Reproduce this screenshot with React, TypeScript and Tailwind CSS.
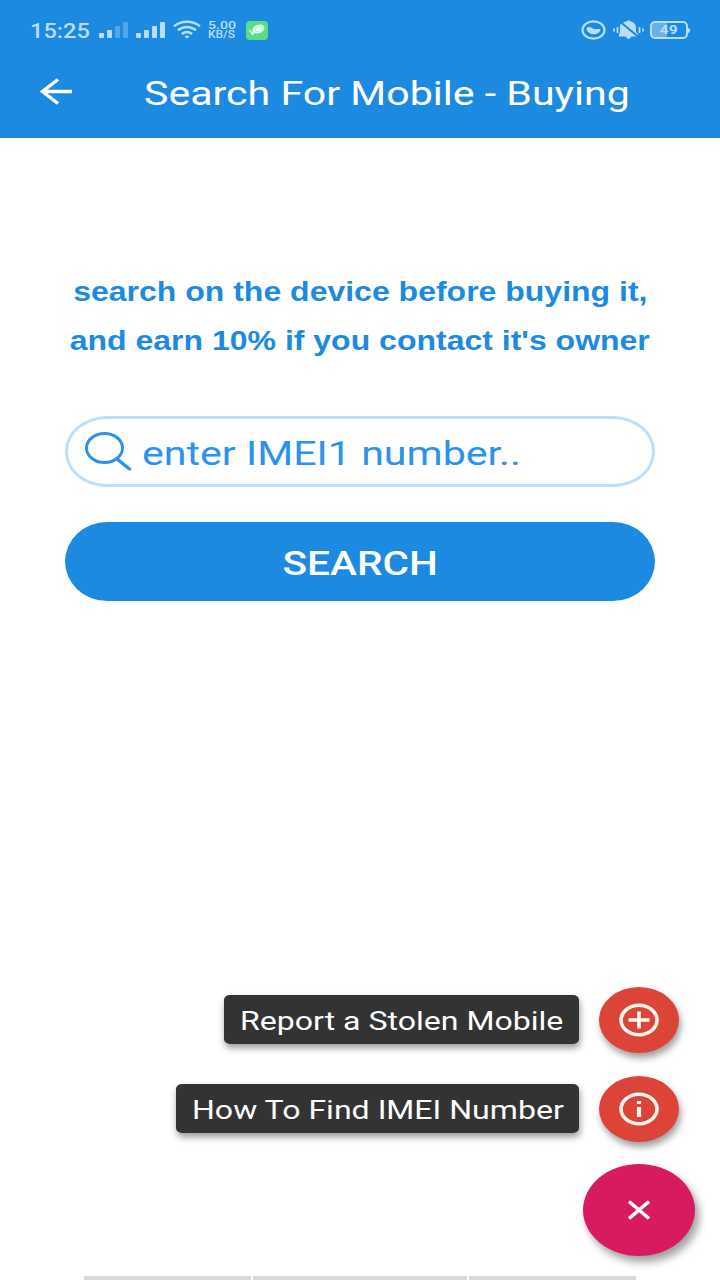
import React from 'react';

interface WideTextProps {
  children: React.ReactNode;
  className?: string;
}

// Text is drawn wider than its natural width, the scale comes from the class name
function WideText({ children, className = '' }: WideTextProps) {
  return <span className={`inline-block whitespace-nowrap ${className}`}>{children}</span>;
}

function SignalBars({ level, className = '' }: { level: number; className?: string }) {
  const heights = [5, 8, 12, 16];
  return (
    <svg className={className} width="29" height="17" viewBox="0 0 29 17" fill="#b9dcf7">
      {heights.map((h, idx) => (
        <rect key={idx} x={idx * 8} y={17 - h} width="5" height={h} rx="1" opacity={idx < level ? 1 : 0.35} />
      ))}
    </svg>
  );
}

function StatusBar() {
  return (
    <div className="flex h-[60px] items-center pl-[30px] pr-[30px] text-[#b9dcf7]">
      <div className="flex w-[69px] pt-[1px]">
        <WideText className="origin-left scale-x-[1.18] text-[20px] font-medium leading-none">15:25</WideText>
      </div>
      <SignalBars level={2} className="mt-[-2px]" />
      <SignalBars level={4} className="ml-2 mt-[-2px]" />
      <svg className="ml-2" width="28" height="20" viewBox="0 0 28 20" fill="none" stroke="#b9dcf7" strokeWidth="2.4">
        <path d="M1 6.2C8.5 .3 19.5 .3 27 6.2" />
        <path d="M5 10.3C10.5 5.8 17.5 5.8 23 10.3" />
        <path d="M8.8 14C12 11.4 16 11.4 19.2 14" />
        <path d="M11.5 16.4Q14 14.8 16.5 16.4L14 18.8Z" fill="#b9dcf7" stroke="none" />
      </svg>
      <div className="ml-[7px] flex w-[38px] flex-col items-start text-[10.5px] font-medium leading-[9.5px]">
        <WideText className="origin-left scale-x-[1.35]">5.00</WideText>
        <WideText className="origin-left scale-x-[1.14]">KB/S</WideText>
      </div>
      <svg width="22" height="19" viewBox="0 0 22 19">
        <rect width="22" height="19" rx="4" fill="#5bdc8b" />
        <ellipse cx="12.5" cy="8" rx="6" ry="4.3" fill="#e9fff0" transform="rotate(-18 12.5 8)" />
        <ellipse cx="13" cy="8" rx="4.2" ry="2.8" fill="none" stroke="#83dca4" strokeWidth=".5" transform="rotate(-18 13 8)" />
        <path d="M3.8 8.5Q3.5 12 7.5 13.8" fill="none" stroke="#e9fff0" strokeWidth="1" />
        <circle cx="6.5" cy="12" r="1.7" fill="#e9fff0" />
      </svg>

      <svg className="ml-auto" width="25" height="20" viewBox="0 0 25 20">
        <ellipse cx="12.5" cy="10" rx="11" ry="8.7" fill="none" stroke="#b9dcf7" strokeWidth="2.2" />
        <path d="M5.5 8.5C7 6 10 7.2 12 8.6C14.5 10 17 8.4 19.5 9.5C18.5 16 6.5 16 5.500 8.500Z" fill="#b9dcf7" />
      </svg>
      <svg className="ml-[7px]" width="31" height="20" viewBox="0 0 31 20">
        <path
          d="M6 16.5V14L7 12V5L9 3.5C10.5 2.2 12 1.7 13.5 1.5C14 .2 17 .2 17.5 1.5C21 2 23 4.5 23 8V12L25 14V16.5H18C17.5 19.8 13.5 19.8 13 16.5Z"
          fill="#b9dcf7"
        />
        <path d="M7.5 2L25.5 17" stroke="#1d8ae2" strokeWidth="2" />
        <path d="M1 8.5V11.5M4.5 7V13M26.5 7V13M30 8.5V11.5" stroke="#b9dcf7" strokeWidth="1.7" />
      </svg>
      <div className="ml-[6px] flex items-center">
        <div className="flex h-[18px] w-[38px] items-center justify-center rounded-[5px] border-2 border-[#b9dcf7] bg-linear-to-r from-[#67b1ec] from-45% to-transparent to-45% text-[13.5px] font-bold">
          <WideText className="scale-x-[1.16] leading-none">49</WideText>
        </div>
        <div className="h-[5px] w-[2px] rounded-r-sm bg-[#b9dcf7]" />
      </div>
    </div>
  );
}

function Header() {
  return (
    <header className="h-[138px] shrink-0 bg-[#1d8ae2]">
      <StatusBar />
      <div className="flex h-[66px] items-center pl-10 text-white">
        <button className="mt-[-3px] w-[104px]">
          <svg width="33" height="27" viewBox="0 0 33 27" fill="none" stroke="currentColor" strokeWidth="3.4">
            <path d="M32 13.5H3M18 1.5L2.5 13.5L18 25.5" />
          </svg>
        </button>
        <h1 className="flex pt-[2px]">
          <WideText className="origin-left scale-x-[1.227] text-[33.5px] leading-none">Search For Mobile - Buying</WideText>
        </h1>
      </div>
    </header>
  );
}

function SearchForm() {
  return (
    <main className="flex flex-col px-[65px] pt-[130px]">
      <p className="flex flex-col items-center font-[family-name:Liberation_Sans,sans-serif] text-[27px] font-bold leading-[49px] text-[#1d8ae2]">
        <WideText className="scale-x-[1.185]">search on the device before buying it,</WideText>
        <WideText className="scale-x-[1.185]">and earn 10% if you contact it's owner</WideText>
      </p>

      <div className="mt-[50px] flex h-[71px] items-center rounded-[42px/35px] border-[3px] border-[#bddffb] pl-[17px] text-[#2b93ef]">
        <svg width="47" height="39" viewBox="0 0 47 39" fill="none" stroke="currentColor" strokeWidth="3">
          <ellipse cx="19.5" cy="16" rx="18" ry="14.5" />
          <path d="M32 27L44.5 37" strokeWidth="3.5" strokeLinecap="round" />
        </svg>
        <WideText className="ml-[9.5px] mt-1 origin-left scale-x-[1.229] text-[33.5px] leading-none">enter IMEI1 number..</WideText>
      </div>

      <button className="mt-[35px] flex h-[79px] items-center justify-center rounded-[42px/39.5px] bg-[#1d8ae2] pt-[3px] text-[33px] font-medium text-white">
        <WideText className="scale-x-[1.23] leading-none">SEARCH</WideText>
      </button>
    </main>
  );
}

interface ActionRowProps {
  label: string;
  widthClass: string;
  children: React.ReactNode;
}

function ActionRow({ label, widthClass, children }: ActionRowProps) {
  return (
    <div className="flex h-[66px] items-center justify-end gap-5">
      <div className={`mb-[1px] flex h-[49px] items-center rounded-[6px/5px] bg-[#333333] pl-4 pt-[3px] text-white shadow-[1px_4px_7px_rgba(0,0,0,0.4)] ${widthClass}`}>
        <WideText className="origin-left scale-x-[1.233] text-[26px] leading-none">{label}</WideText>
      </div>
      <button className="flex h-[66px] w-20 items-center justify-center rounded-[50%] bg-[#db4437] shadow-[2px_5px_7px_rgba(0,0,0,0.38)]">
        <svg width="40" height="34" viewBox="0 0 40 34" fill="none" stroke="#fff8f0" strokeWidth="3.6">
          <ellipse cx="20" cy="17" rx="18" ry="14.8" />
          {children}
        </svg>
      </button>
    </div>
  );
}

function FloatingMenu() {
  return (
    <div className="mt-auto flex flex-col items-end pb-[20px] pr-[25px]">
      <div className="flex flex-col gap-[22.5px] pr-4">
        <ActionRow label="Report a Stolen Mobile" widthClass="w-[355px]">
          <path d="M9.5 17H30.5M20 8.5V25.5" strokeWidth="3.6" />
        </ActionRow>
        <ActionRow label="How To Find IMEI Number" widthClass="w-[403px]">
          <path d="M20 9V12M20 15V25" strokeWidth="4.2" />
        </ActionRow>
      </div>
      <button className="mt-[22.5px] flex h-[92px] w-28 items-center justify-center rounded-[50%] bg-[#d81b60] shadow-[4px_6px_8px_rgba(0,0,0,0.38)]">
        <svg width="24" height="20" viewBox="0 0 24 20" fill="none" stroke="#fff" strokeWidth="3.6">
          <path d="M2 1.5L22 18.5M22 1.5L2 18.5" />
        </svg>
      </button>
    </div>
  );
}

export default function App() {
  return (
    <div className="flex h-[1280px] w-[720px] flex-col overflow-hidden bg-white font-[family-name:Roboto,sans-serif]">
      <Header />
      <SearchForm />
      <FloatingMenu />
      {/* Top edge of the keyboard strip */}
      <div className="flex h-1 shrink-0 gap-[2px] pl-[84px]">
        <div className="w-[167px] bg-[#d9d9d9]" />
        <div className="w-[214px] bg-[#d9d9d9]" />
        <div className="w-[167px] bg-[#d9d9d9]" />
      </div>
    </div>
  );
}
